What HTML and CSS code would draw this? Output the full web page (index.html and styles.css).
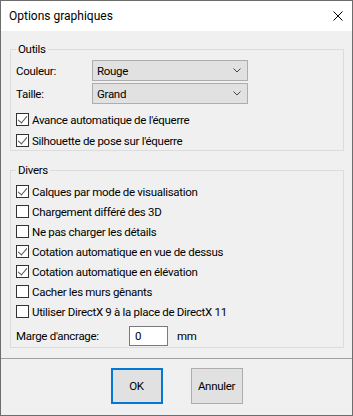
FILE: index.html
```html
<!DOCTYPE html>
<html lang="fr">
<head>
<meta charset="utf-8">
<title>Options graphiques</title>
<link rel="stylesheet" href="styles.css">
</head>
<body>
<div class="window">
  <div class="titlebar">
    <span class="title">Options graphiques</span>
    <svg class="close" width="10" height="10" viewBox="0 0 10 10"><path d="M0.5 0.5L9.5 9.5M9.5 0.5L0.5 9.5" stroke="#000" stroke-width="1" fill="none"/></svg>
  </div>
  <div class="content">
    <fieldset class="group group-tools">
      <legend>Outils</legend>
      <div class="field-grid">
        <label class="field-label">Couleur:</label>
        <div class="select"><span>Rouge</span><svg width="8" height="5" viewBox="0 0 8 5"><path d="M0.5 0.5L4 4L7.5 0.5" stroke="#444" fill="none"/></svg></div>
        <label class="field-label">Taille:</label>
        <div class="select"><span>Grand</span><svg width="8" height="5" viewBox="0 0 8 5"><path d="M0.5 0.5L4 4L7.5 0.5" stroke="#444" fill="none"/></svg></div>
      </div>
      <div class="checks">
        <div class="check-row"><span class="box checked"></span><span>Avance automatique de l'équerre</span></div>
        <div class="check-row"><span class="box checked"></span><span>Silhouette de pose sur l'équerre</span></div>
      </div>
    </fieldset>
    <fieldset class="group group-misc">
      <legend>Divers</legend>
      <div class="checks">
        <div class="check-row"><span class="box checked"></span><span>Calques par mode de visualisation</span></div>
        <div class="check-row"><span class="box"></span><span>Chargement différé des 3D</span></div>
        <div class="check-row"><span class="box"></span><span>Ne pas charger les détails</span></div>
        <div class="check-row"><span class="box checked"></span><span>Cotation automatique en vue de dessus</span></div>
        <div class="check-row"><span class="box checked"></span><span>Cotation automatique en élévation</span></div>
        <div class="check-row"><span class="box"></span><span>Cacher les murs gênants</span></div>
        <div class="check-row"><span class="box"></span><span>Utiliser DirectX 9 à la place de DirectX 11</span></div>
      </div>
      <div class="margin-row">
        <span class="margin-label">Marge d'ancrage:</span>
        <span class="text-input">0</span>
        <span class="unit">mm</span>
      </div>
    </fieldset>
  </div>
  <div class="footer">
    <button class="btn btn-default">OK</button>
    <button class="btn">Annuler</button>
  </div>
</div>
</body>
</html>
```
FILE: styles.css
```css
* { box-sizing: border-box; }
html, body { margin: 0; padding: 0; }
body {
  font-family: Roboto, "Noto Sans", sans-serif;
  font-size: 11.5px;
  letter-spacing: -0.3px;
  color: #000;
  background: #fff;
}
.window {
  width: 353px;
  height: 416px;
  border: 1px solid #6d6d6d;
  background: #f0f0f0;
  display: flex;
  flex-direction: column;
}
.titlebar {
  height: 30px;
  flex: none;
  background: #fff;
  display: flex;
  align-items: center;
  justify-content: space-between;
  padding: 0 9px 0 8px;
}
.title { font-size: 12px; line-height: 16px; letter-spacing: 0; }
.close { display: block; }
.content {
  flex: 1;
  min-height: 0;
  padding: 10px 8px 0 9px;
  display: flex;
  flex-direction: column;
}
.group {
  margin: 0;
  border: 1px solid #dcdcdc;
  padding: 3px 6px 1px 5px;
  min-width: 0;
}
.group legend {
  padding: 0 2px;
  line-height: 16px;
}
.group-misc {
  margin-top: 11px;
  padding-top: 5px;
  padding-bottom: 1px;
}
.field-grid {
  display: grid;
  grid-template-columns: 76px 156px;
  row-gap: 2px;
  align-items: center;
}
.field-label { line-height: 16px; }
.select {
  height: 21px;
  border: 1px solid #adadad;
  background: #e1e1e1;
  display: flex;
  align-items: center;
  justify-content: space-between;
  padding: 0 6px 0 4px;
}
.select svg { display: block; }
.checks {
  display: flex;
  flex-direction: column;
  gap: 3px;
}
.group-tools .checks { margin-top: 7px; gap: 4px; }
.check-row {
  height: 17px;
  display: flex;
  align-items: center;
  gap: 3px;
}
.box {
  width: 13px;
  height: 13px;
  border: 1px solid #333;
  background: #fff;
  flex: none;
  position: relative;
}
.box.checked::after {
  content: "";
  position: absolute;
  left: 3px;
  top: 0px;
  width: 4px;
  height: 8px;
  border: solid #555;
  border-width: 0 1px 1px 0;
  transform: rotate(40deg);
}
.margin-row {
  display: flex;
  align-items: center;
  margin-top: 6px;
  height: 20px;
}
.margin-label { width: 113px; }
.text-input {
  width: 39px;
  height: 20px;
  border: 1px solid #7a7a7a;
  background: #fff;
  padding-left: 5px;
  line-height: 18px;
}
.unit { margin-left: 9px; }
.footer {
  flex: none;
  height: 57px;
  border-top: 1px solid #a0a0a0;
  display: flex;
  justify-content: center;
  gap: 28px;
  padding-top: 9px;
}
.btn {
  width: 52px;
  height: 36px;
  border: 1px solid #adadad;
  background: #e1e1e1;
  font: inherit;
  letter-spacing: inherit;
  color: #000;
  padding: 0;
}
.btn-default {
  border: 2px solid #0078d7;
}
```
